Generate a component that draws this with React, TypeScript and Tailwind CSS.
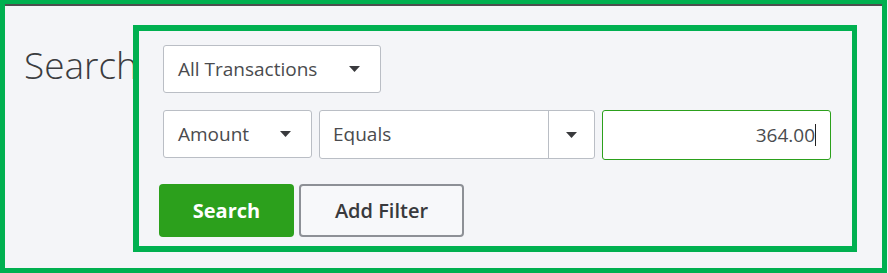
import { ReactNode } from 'react';

const Caret = () => (
  <svg width="11" height="6" viewBox="0 0 11 6" className="shrink-0">
    <path d="M0 0h11L5.5 6z" fill="#393a3d" />
  </svg>
);

interface SelectProps {
  label: string;
  width: string;
  children?: ReactNode;
}

const Select = ({ label, width }: SelectProps) => (
  <div
    className={`${width} h-[48px] flex items-center justify-between pl-[14px] pr-[20px] bg-white border border-[#babec5] rounded-[3px] text-[19px] text-[#4a4b4e]`}
  >
    <span>{label}</span>
    <Caret />
  </div>
);

const App = () => {
  return (
    <div className="w-[888px] h-[273px] bg-[#f4f5f8] font-['Open_Sans',sans-serif]">
      <div className="w-[887px] h-[273px] border-[5px] border-t-4 border-[#00b050] flex flex-col">
        {/* thin dark rule under the top edge */}
        <div className="h-[2px] bg-[#4d4d4f] shrink-0" />
        <div className="flex">
          <div className="w-[128px] pl-[19px] pt-[40px] shrink-0">
            <h1 className="text-[37px] leading-none font-light text-[#3b3c3f] whitespace-nowrap">Search</h1>
          </div>

          {/* highlighted filter panel */}
          <div className="relative z-10 mt-[19px] w-[724px] h-[227px] border-[6px] border-r-[5px] border-[#00b050] bg-[#f4f5f8] pl-[24px] pt-[14px] flex flex-col">
            <Select label="All Transactions" width="w-[218px]" />

            <div className="flex gap-[7px] mt-[17px]">
              <Select label="Amount" width="w-[149px]" />
              <div className="w-[276px] h-[49px] flex bg-white border border-[#babec5] rounded-[3px] text-[19px] text-[#4a4b4e]">
                <div className="flex-1 flex items-center pl-[13px] border-r border-[#babec5]">Equals</div>
                <div className="w-[45px] flex items-center justify-center">
                  <Caret />
                </div>
              </div>
              <div className="w-[229px] h-[50px] flex items-center justify-end pr-[14px] bg-white border-[1.5px] border-[#2ca01c] rounded-[3px] text-[19px] text-[#4a4b4e]">
                <span>364.00</span>
                <span className="w-px h-[22px] bg-[#222]" />
              </div>
            </div>

            <div className="flex gap-[5px] mt-[24px] -ml-[4px]">
              <button className="w-[135px] h-[53px] rounded-[4px] bg-[#2ca01c] text-white text-[20px] font-bold">
                Search
              </button>
              <button className="w-[165px] h-[53px] rounded-[4px] border-2 border-[#8d9096] bg-[#f7f8fa] text-[#393a3d] text-[20px] font-semibold">
                Add Filter
              </button>
            </div>
          </div>
        </div>
      </div>
    </div>
  );
};

export default App;
